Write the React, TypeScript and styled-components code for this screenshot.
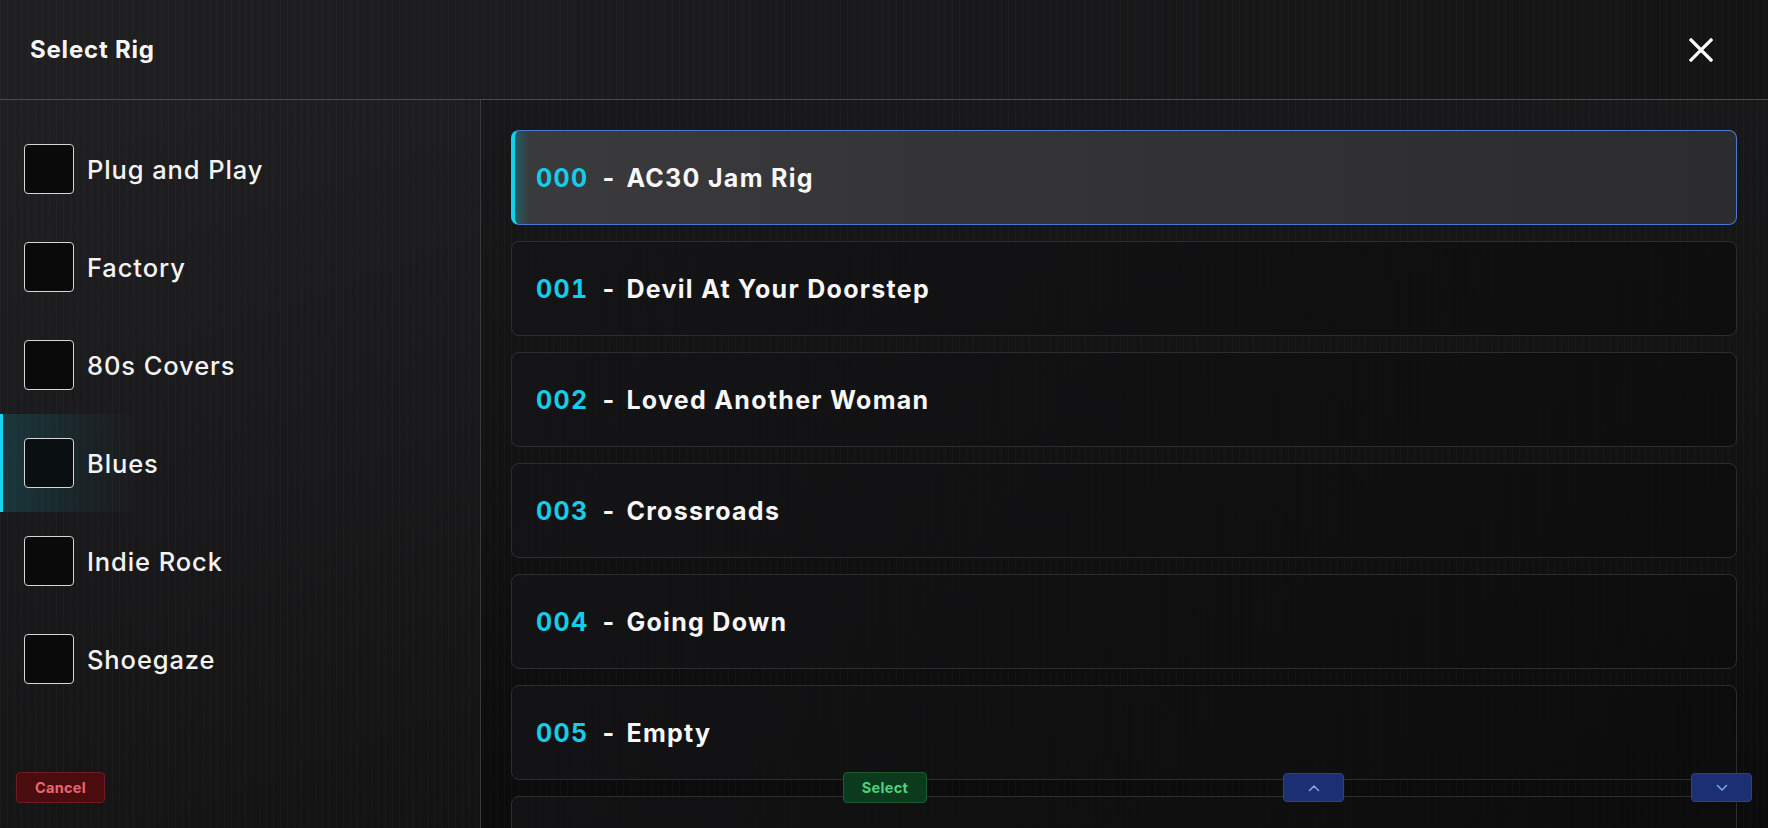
import React from "react";
import styled, { createGlobalStyle, css } from "styled-components";

const GlobalStyle = createGlobalStyle`
  html, body {
    margin: 0;
    padding: 0;
    background: #111112;
    overflow: hidden;
  }
  * { box-sizing: border-box; }
  #root { height: 100vh; }
`;

const stripes = `repeating-linear-gradient(90deg, rgba(255,255,255,0.018) 0px, rgba(255,255,255,0.018) 1px, rgba(0,0,0,0) 1px, rgba(0,0,0,0) 3px, rgba(0,0,0,0.05) 3px, rgba(0,0,0,0.05) 4px, rgba(0,0,0,0) 4px, rgba(0,0,0,0) 7px)`;

const Screen = styled.div`
  position: relative;
  width: 100vw;
  height: 100vh;
  display: flex;
  flex-direction: column;
  font-family: Inter, "Noto Sans", sans-serif;
  color: #ffffff;
  background: ${stripes}, linear-gradient(180deg, #1a1a1c 0%, #121213 60%, #0b0b0b 100%);
  overflow: hidden;
`;

const Header = styled.header`
  height: 100px;
  flex-shrink: 0;
  display: flex;
  align-items: center;
  justify-content: space-between;
  padding: 0 55px 0 30px;
  border-bottom: 1px solid #4b4b4d;
  background: ${stripes}, linear-gradient(90deg, #202022 0%, #1a1a1c 45%, #141415 100%);
`;

const Title = styled.h1`
  margin: 0;
  font-size: 24px;
  font-weight: 700;
  letter-spacing: 0.8px;
  color: #f5f5f5;
`;

const CloseButton = styled.button`
  width: 24px;
  height: 24px;
  padding: 0;
  border: none;
  background: transparent;
  display: flex;
  align-items: center;
  justify-content: center;
  cursor: pointer;
`;

const Body = styled.div`
  flex: 1;
  display: flex;
  min-height: 0;
`;

const Sidebar = styled.aside`
  width: 481px;
  flex-shrink: 0;
  border-right: 1px solid #3a3a3c;
  padding-top: 20px;
  display: flex;
  flex-direction: column;
  background: ${stripes}, linear-gradient(160deg, #202022 0%, #1b1b1d 40%, #131314 100%);
`;

const Category = styled.div<{ $active?: boolean }>`
  height: 98px;
  display: flex;
  align-items: center;
  gap: 13px;
  padding-left: 24px;
  font-size: 25.5px;
  font-weight: 550;
  letter-spacing: 0.9px;
  color: #f3f3f3;
  ${(p) =>
    p.$active &&
    css`
      box-shadow: inset 3px 0 0 #14d4ef;
      background: linear-gradient(90deg, rgba(20, 200, 225, 0.16) 0px, rgba(20, 200, 225, 0.06) 80px, rgba(20, 200, 225, 0) 140px);
    `}
`;

const Checkbox = styled.span<{ $active?: boolean }>`
  width: 50px;
  height: 50px;
  flex-shrink: 0;
  border: 1px solid #d6d6d6;
  border-radius: 4px;
  background: ${(p) => (p.$active ? "#0a1011" : "#0a0a0a")};
`;

const Main = styled.main`
  flex: 1;
  min-width: 0;
  padding: 30px 31px 0 30px;
  display: flex;
  flex-direction: column;
  gap: 16px;
  overflow: hidden;
`;

const Row = styled.div<{ $selected?: boolean }>`
  height: 95px;
  flex-shrink: 0;
  display: flex;
  align-items: center;
  border-radius: 8px;
  padding-left: 24px;
  font-size: 25px;
  font-weight: 700;
  letter-spacing: 1.3px;
  border: 1px solid #2d2d2f;
  background: linear-gradient(90deg, rgba(20, 20, 22, 0.85) 0%, rgba(12, 12, 13, 0.8) 100%);
  ${(p) =>
    p.$selected &&
    css`
      border: 1px solid #4a78d4;
      border-left: 4px solid #14d0ee;
      padding-left: 21px;
      background: linear-gradient(90deg, rgba(40, 150, 165, 0.55) 0px, rgba(60, 62, 64, 0.9) 14px, #3a3a3c 40px, #323234 55%, #2c2c2e 100%);
    `}
`;

const Num = styled.span`
  color: #16cde9;
  font-variant-numeric: tabular-nums;
`;

const Dash = styled.span`
  margin: 0 11px 0 14px;
  color: #f5f5f5;
`;

const Name = styled.span`
  color: #f7f7f7;
`;

const Footer = styled.div`
  position: absolute;
  left: 0;
  right: 0;
  bottom: 25px;
  height: 31px;
  display: flex;
  align-items: center;
  padding-left: 16px;
  pointer-events: none;
`;

const FooterButton = styled.button<{ $kind: "cancel" | "select" | "nav"; $offset: number; $w: number }>`
  pointer-events: auto;
  margin-left: ${(p) => p.$offset}px;
  width: ${(p) => p.$w}px;
  height: ${(p) => (p.$kind === "nav" ? 29 : 31)}px;
  border-radius: 4px;
  font-family: Inter, "Noto Sans", sans-serif;
  font-size: 14.5px;
  font-weight: 700;
  letter-spacing: 0.3px;
  display: flex;
  align-items: center;
  justify-content: center;
  padding: 0;
  cursor: pointer;
  ${(p) =>
    p.$kind === "cancel" &&
    css`
      background: #4b0c10;
      border: 1px solid #6e1c22;
      color: #e86670;
    `}
  ${(p) =>
    p.$kind === "select" &&
    css`
      background: #0b3a1d;
      border: 1px solid #1d5a32;
      color: #4fd27e;
    `}
  ${(p) =>
    p.$kind === "nav" &&
    css`
      background: #1b2f72;
      border: 1px solid #28429a;
      color: #7aa4f2;
    `}
`;

const categories = ["Plug and Play", "Factory", "80s Covers", "Blues", "Indie Rock", "Shoegaze"];
const rigs = ["AC30 Jam Rig", "Devil At Your Doorstep", "Loved Another Woman", "Crossroads", "Going Down", "Empty"];

const Chevron = ({ up }: { up?: boolean }) => (
  <svg width="12" height="8" viewBox="0 0 12 8" fill="none">
    <path
      d={up ? "M1.5 6.5 L6 2 L10.5 6.5" : "M1.5 1.5 L6 6 L10.5 1.5"}
      stroke="currentColor"
      strokeWidth="1.6"
      strokeLinecap="round"
      strokeLinejoin="round"
    />
  </svg>
);

export default function App() {
  return (
    <>
      <GlobalStyle />
      <Screen>
        <Header>
          <Title>Select Rig</Title>
          <CloseButton aria-label="Close">
            <svg width="24" height="24" viewBox="0 0 24 24" fill="none">
              <path d="M2 2 L22 22 M22 2 L2 22" stroke="#ffffff" strokeWidth="3.2" strokeLinecap="square" />
            </svg>
          </CloseButton>
        </Header>
        <Body>
          <Sidebar>
            {categories.map((c) => (
              <Category key={c} $active={c === "Blues"}>
                <Checkbox $active={c === "Blues"} />
                {c}
              </Category>
            ))}
          </Sidebar>
          <Main>
            {rigs.map((r, i) => (
              <Row key={i} $selected={i === 0}>
                <Num>{String(i).padStart(3, "0")}</Num>
                <Dash>-</Dash>
                <Name>{r}</Name>
              </Row>
            ))}
            <Row aria-label="006 - Empty" />
          </Main>
        </Body>
        <Footer>
          <FooterButton $kind="cancel" $offset={0} $w={89}>Cancel</FooterButton>
          <FooterButton $kind="select" $offset={738} $w={84}>Select</FooterButton>
          <FooterButton $kind="nav" $offset={356} $w={61}><Chevron up /></FooterButton>
          <FooterButton $kind="nav" $offset={347} $w={61}><Chevron /></FooterButton>
        </Footer>
      </Screen>
    </>
  );
}
